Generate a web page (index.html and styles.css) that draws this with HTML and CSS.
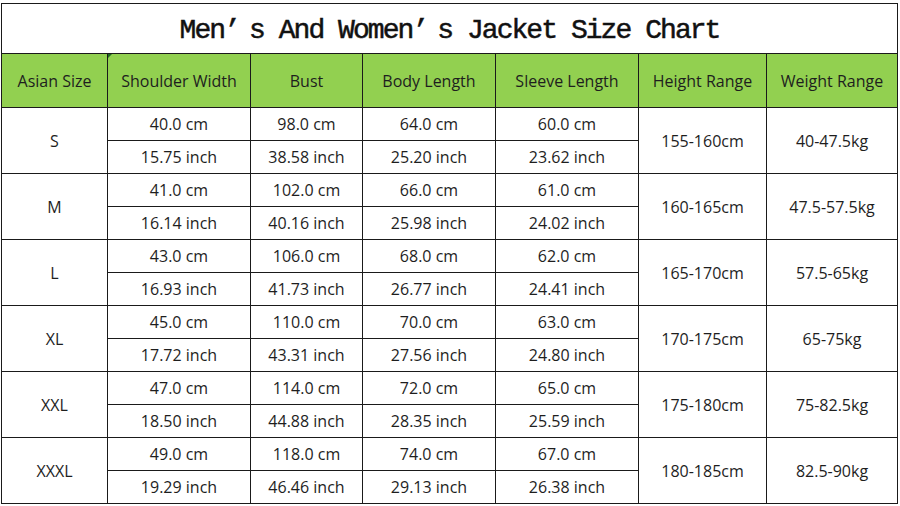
FILE: index.html
```html
<!DOCTYPE html>
<html>
<head>
<meta charset="utf-8">
<link rel="stylesheet" href="styles.css">
</head>
<body>
<div class="sheet">
<table class="chart">
  <colgroup>
    <col class="c1"><col class="c2"><col class="c3"><col class="c4"><col class="c5"><col class="c6"><col class="c7">
  </colgroup>
  <tr class="title-row"><td colspan="7" class="title">Men<span class="ap">’</span>s And Women<span class="ap">’</span>s Jacket Size Chart</td></tr>
  <tr class="head-row">
    <th>Asian Size</th><th class="flag">Shoulder Width</th><th>Bust</th><th>Body Length</th><th>Sleeve Length</th><th>Height Range</th><th>Weight Range</th>
  </tr>
  <tr><td rowspan="2">S</td><td>40.0 cm</td><td>98.0 cm</td><td>64.0 cm</td><td>60.0 cm</td><td rowspan="2">155-160cm</td><td rowspan="2">40-47.5kg</td></tr>
  <tr><td>15.75 inch</td><td>38.58 inch</td><td>25.20 inch</td><td>23.62 inch</td></tr>
  <tr><td rowspan="2">M</td><td>41.0 cm</td><td>102.0 cm</td><td>66.0 cm</td><td>61.0 cm</td><td rowspan="2">160-165cm</td><td rowspan="2">47.5-57.5kg</td></tr>
  <tr><td>16.14 inch</td><td>40.16 inch</td><td>25.98 inch</td><td>24.02 inch</td></tr>
  <tr><td rowspan="2">L</td><td>43.0 cm</td><td>106.0 cm</td><td>68.0 cm</td><td>62.0 cm</td><td rowspan="2">165-170cm</td><td rowspan="2">57.5-65kg</td></tr>
  <tr><td>16.93 inch</td><td>41.73 inch</td><td>26.77 inch</td><td>24.41 inch</td></tr>
  <tr><td rowspan="2">XL</td><td>45.0 cm</td><td>110.0 cm</td><td>70.0 cm</td><td>63.0 cm</td><td rowspan="2">170-175cm</td><td rowspan="2">65-75kg</td></tr>
  <tr><td>17.72 inch</td><td>43.31 inch</td><td>27.56 inch</td><td>24.80 inch</td></tr>
  <tr><td rowspan="2">XXL</td><td>47.0 cm</td><td>114.0 cm</td><td>72.0 cm</td><td>65.0 cm</td><td rowspan="2">175-180cm</td><td rowspan="2">75-82.5kg</td></tr>
  <tr><td>18.50 inch</td><td>44.88 inch</td><td>28.35 inch</td><td>25.59 inch</td></tr>
  <tr><td rowspan="2">XXXL</td><td>49.0 cm</td><td>118.0 cm</td><td>74.0 cm</td><td>67.0 cm</td><td rowspan="2">180-185cm</td><td rowspan="2">82.5-90kg</td></tr>
  <tr><td>19.29 inch</td><td>46.46 inch</td><td>29.13 inch</td><td>26.38 inch</td></tr>
</table>
</div>
</body>
</html>
```
FILE: styles.css
```css
html, body {
  margin: 0;
  padding: 0;
  background: #ffffff;
}
.sheet {
  padding: 3px 0 0 1px;
}
.chart {
  border-collapse: collapse;
  table-layout: fixed;
  width: 897px;
  font-family: "Open Sans", "Noto Sans", sans-serif;
  font-size: 16px;
  color: #1e1e1e;
}
.c1 { width: 106px; }
.c2 { width: 143px; }
.c3 { width: 112px; }
.c4 { width: 133px; }
.c5 { width: 143px; }
.c6 { width: 128px; }
.c7 { width: 131px; }
.chart td, .chart th {
  border: 1px solid #1a1a1a;
  text-align: center;
  vertical-align: middle;
  padding: 0;
  height: 32px;
  line-height: 20px;
  white-space: nowrap;
}
.chart th {
  font-weight: normal;
  background: #92d050;
  height: 53px;
}
.title-row .title {
  height: 45px;
  font-family: "Liberation Mono", "DejaVu Sans Mono", monospace;
  font-weight: normal;
  -webkit-text-stroke: 0.5px #111;
  font-size: 28px;
  letter-spacing: -1.95px;
  color: #111;
  padding: 4px 0 0 0;
}
.ap {
  margin-right: 10px;
}
.flag {
  position: relative;
}
.flag::before {
  content: "";
  position: absolute;
  left: 0;
  top: 0;
  border-top: 4px solid #1f6b1f;
  border-right: 4px solid transparent;
}
```
